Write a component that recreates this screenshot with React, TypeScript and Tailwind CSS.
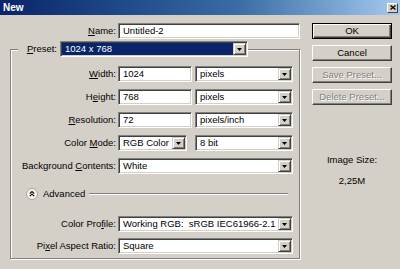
import React from 'react';

// sunken white box used for text fields and combo boxes
const Field = ({ children, className = '' }: { children?: React.ReactNode; className?: string }) => (
  <div
    className={`h-4 bg-white border border-[#808080] border-r-white border-b-white shadow-[inset_1px_1px_0_#404040,inset_-1px_-1px_0_#d4d0c8] p-px flex items-stretch ${className}`}
  >
    {children}
  </div>
);

const Arrow = () => (
  <div className="w-[13px] shrink-0 bg-[#d4d0c8] border border-[#d4d0c8] border-r-[#404040] border-b-[#404040] shadow-[inset_1px_1px_0_#fff,inset_-1px_-1px_0_#808080] flex items-center justify-center">
    <svg width="5" height="3" viewBox="0 0 5 3">
      <path d="M0 0h5L2.5 3z" fill="#000" />
    </svg>
  </div>
);

const Select = ({ value, className = '' }: { value: string; className?: string }) => (
  <Field className={className}>
    <span className="flex-1 pl-[3px] leading-[12px] whitespace-pre overflow-hidden">{value}</span>
    <Arrow />
  </Field>
);

const Input = ({ value, className = '' }: { value: string; className?: string }) => (
  <Field className={className}>
    <span className="flex-1 pl-[3px] leading-[12px]">{value}</span>
  </Field>
);

const Label = ({ children }: { children: React.ReactNode }) => (
  <span className="w-[105px] text-right whitespace-nowrap">{children}</span>
);

const Button = ({ children, isDefault = false, disabled = false }: { children: React.ReactNode; isDefault?: boolean; disabled?: boolean }) => (
  <div
    className={`w-[80px] h-4 flex items-center justify-center ${
      isDefault
        ? 'border border-black shadow-[inset_1px_1px_0_#fff,inset_-1px_-1px_0_#404040,inset_-2px_-2px_0_#808080]'
        : 'border border-white border-r-[#404040] border-b-[#404040] shadow-[inset_-1px_-1px_0_#808080]'
    } ${disabled ? 'text-[#808080] [text-shadow:1px_1px_0_#fff]' : ''}`}
  >
    {children}
  </div>
);

const U = ({ children }: { children: React.ReactNode }) => <span className="underline underline-offset-1">{children}</span>;

export default function App() {
  return (
    <div className="w-[400px] h-[269px] overflow-hidden bg-[#d4d0c8] text-black text-[9.5px] font-['Liberation_Sans',Arial,sans-serif]">
      {/* Title bar */}
      <div className="h-[15px] bg-gradient-to-r from-[#0a246a] via-[#3a6ea5] via-60% to-[#a6caf0] flex items-center justify-between pl-[3px] pr-[2px]">
        <span className="text-white font-bold text-[10px]">New</span>
        <div className="w-[11px] h-[10px] bg-[#d4d0c8] border border-white border-r-[#404040] border-b-[#404040] flex items-center justify-center">
          <svg width="6" height="5" viewBox="0 0 6 5">
            <path d="M0.5 0.5l5 4M5.5 0.5l-5 4" stroke="#000" strokeWidth="1.3" />
          </svg>
        </div>
      </div>

      <div className="flex">
        {/* Left side */}
        <div className="w-[300px] flex flex-col">
          <div className="mt-[8px] flex items-center">
            <span className="w-[116px] text-right">
              <U>N</U>ame:
            </span>
            <Input value="Untitled-2" className="ml-[2px] w-[182px]" />
          </div>

          <fieldset className="mt-[2px] ml-[10px] w-[290px] border border-[#808080] shadow-[inset_1px_1px_0_#fff,1px_1px_0_#fff] pt-[9px] pb-[4px]">
            <legend className="ml-[7px] bg-[#d4d0c8] flex items-center">
              <span className="w-[39px] text-right">
                <U>P</U>reset:
              </span>
              <Field className="ml-[3px] w-[188px]">
                <span className="flex-1 bg-[#0a246a] text-white pl-[3px] leading-[12px]">1024 x 768</span>
                <Arrow />
              </Field>
            </legend>

            <div className="flex flex-col gap-[7px]">
              <div className="flex items-center">
                <Label>
                  <U>W</U>idth:
                </Label>
                <Input value="1024" className="ml-[2px] w-[74px]" />
                <Select value="pixels" className="ml-[3px] w-[98px]" />
              </div>
              <div className="flex items-center">
                <Label>
                  H<U>e</U>ight:
                </Label>
                <Input value="768" className="ml-[2px] w-[74px]" />
                <Select value="pixels" className="ml-[3px] w-[98px]" />
              </div>
              <div className="flex items-center">
                <Label>
                  <U>R</U>esolution:
                </Label>
                <Input value="72" className="ml-[2px] w-[74px]" />
                <Select value="pixels/inch" className="ml-[3px] w-[98px]" />
              </div>
              <div className="flex items-center">
                <Label>
                  Color <U>M</U>ode:
                </Label>
                <Select value="RGB Color" className="ml-[2px] w-[69px]" />
                <Select value="8 bit" className="ml-[8px] w-[98px]" />
              </div>
              <div className="flex items-center">
                <Label>
                  Background <U>C</U>ontents:
                </Label>
                <Select value="White" className="ml-[2px] w-[175px]" />
              </div>
            </div>

            <div className="mt-[12px] h-4 flex items-center">
              <svg className="ml-[15px]" width="12" height="12" viewBox="0 0 12 12">
                <circle cx="6" cy="6" r="5.5" fill="#f4f3f0" stroke="#a8a5a0" />
                <path d="M3.8 5.6L6 3.6l2.2 2M3.8 8.2L6 6.2l2.2 2" fill="none" stroke="#000" strokeWidth="1.1" />
              </svg>
              <span className="ml-[5px]">Advanced</span>
              <div className="ml-[4px] mr-[11px] flex-1 h-[2px] border-t border-[#808080] border-b border-b-white" />
            </div>

            <div className="mt-[14px] flex flex-col gap-[6px]">
              <div className="flex items-center">
                <Label>
                  Color Pro<U>f</U>ile:
                </Label>
                <Select value="Working RGB:  sRGB IEC61966-2.1" className="ml-[2px] w-[175px]" />
              </div>
              <div className="flex items-center">
                <Label>
                  Pi<U>x</U>el Aspect Ratio:
                </Label>
                <Select value="Square" className="ml-[2px] w-[175px]" />
              </div>
            </div>
          </fieldset>
        </div>

        {/* Right side */}
        <div className="ml-[12px] w-[80px] flex flex-col">
          <div className="mt-[8px] flex flex-col gap-[6px]">
            <Button isDefault>OK</Button>
            <Button>Cancel</Button>
            <Button disabled>Save Preset...</Button>
            <Button disabled>Delete Preset...</Button>
          </div>
          <div className="mt-[48px] text-center">Image Size:</div>
          <div className="mt-[7px] text-center">2,25M</div>
        </div>
      </div>
    </div>
  );
}
